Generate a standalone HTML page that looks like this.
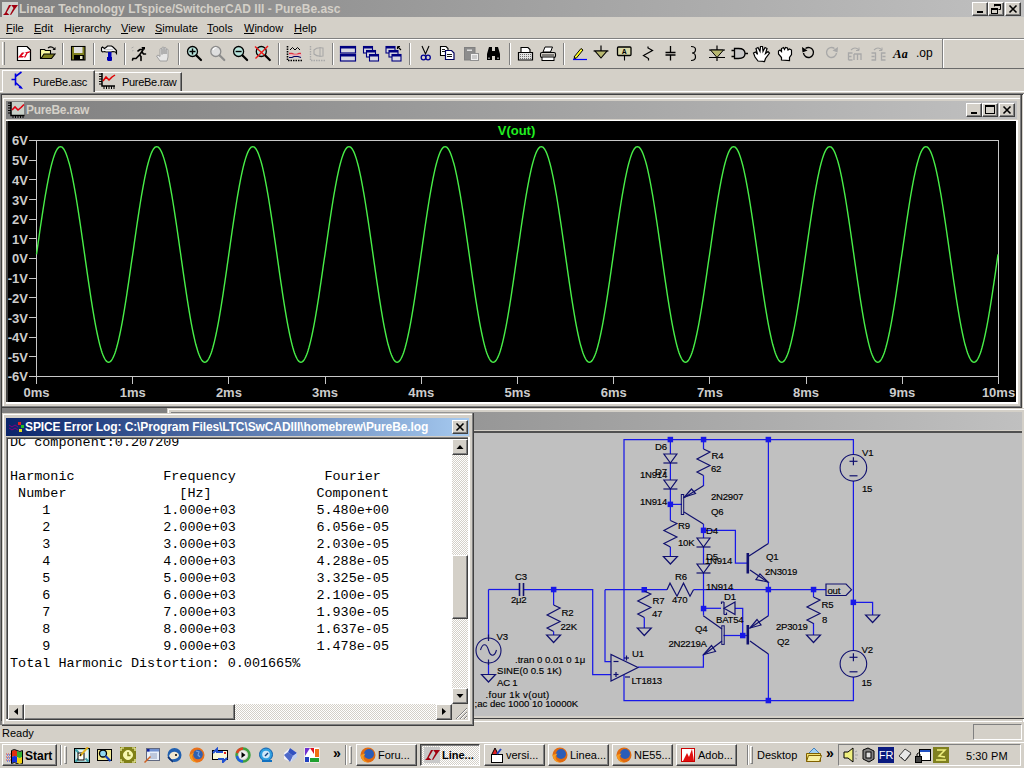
<!DOCTYPE html>
<html><head><meta charset="utf-8">
<style>
*{box-sizing:border-box}
html,body{margin:0;padding:0}
body{width:1024px;height:768px;position:relative;overflow:hidden;background:#d4d0c8;font-family:"Liberation Sans",sans-serif;font-size:11px;color:#000}
.a{position:absolute}
.t{position:absolute;white-space:pre;line-height:1}
.btn{position:absolute;background:#d4d0c8;border-top:1px solid #fff;border-left:1px solid #fff;border-right:1px solid #404040;border-bottom:1px solid #404040;box-shadow:inset -1px -1px 0 #808080}
.sunk{position:absolute;border-top:1px solid #808080;border-left:1px solid #808080;border-right:1px solid #fff;border-bottom:1px solid #fff}
.raised{position:absolute;border-top:1px solid #fff;border-left:1px solid #fff;border-right:1px solid #808080;border-bottom:1px solid #808080}
.sep{position:absolute;width:2px;border-left:1px solid #808080;border-right:1px solid #fff}
.mono{font-family:"Liberation Mono",monospace}
</style></head>
<body>
<!-- main title bar -->
<div class="a" style="left:0;top:0;width:1024px;height:17px;background:linear-gradient(to right,#808080,#c0c0c0)"></div>
<div class="t" style="left:19px;top:3px;font-weight:bold;font-size:12px;color:#d4d0c8">Linear Technology LTspice/SwitcherCAD III - PureBe.asc</div>

<!-- menu -->
<div class="a" style="left:0;top:38px;width:1024px;height:1px;background:#808080"></div>
<div class="a" style="left:0;top:39px;width:1024px;height:1px;background:#fff"></div>

<svg class="a" style="left:0;top:38px" width="1024" height="31" viewBox="0 38 1024 31">
<rect x="2" y="42" width="1" height="23" fill="#fff"/><rect x="4" y="42" width="1" height="23" fill="#808080"/>
<rect x="62" y="43" width="1" height="22" fill="#808080"/><rect x="63" y="43" width="1" height="22" fill="#fff"/>
<rect x="93" y="43" width="1" height="22" fill="#808080"/><rect x="94" y="43" width="1" height="22" fill="#fff"/>
<rect x="124" y="43" width="1" height="22" fill="#808080"/><rect x="125" y="43" width="1" height="22" fill="#fff"/>
<rect x="178" y="43" width="1" height="22" fill="#808080"/><rect x="179" y="43" width="1" height="22" fill="#fff"/>
<rect x="278" y="43" width="1" height="22" fill="#808080"/><rect x="279" y="43" width="1" height="22" fill="#fff"/>
<rect x="332" y="43" width="1" height="22" fill="#808080"/><rect x="333" y="43" width="1" height="22" fill="#fff"/>
<rect x="409" y="43" width="1" height="22" fill="#808080"/><rect x="410" y="43" width="1" height="22" fill="#fff"/>
<rect x="509" y="43" width="1" height="22" fill="#808080"/><rect x="510" y="43" width="1" height="22" fill="#fff"/>
<rect x="563" y="43" width="1" height="22" fill="#808080"/><rect x="564" y="43" width="1" height="22" fill="#fff"/>
<rect x="942" y="39" width="1" height="29" fill="#808080"/><rect x="943" y="39" width="1" height="29" fill="#fff"/>
<path d="M17.5,46.5 h9.5 l3.5,3.5 v10.5 h-13z" fill="#fff" stroke="#000" stroke-width="1.2"/><path d="M27,46.5 l3.5,3.5" fill="none" stroke="#000" stroke-width="1"/>
<path d="M18,57.5 L22,52.5 L24.5,52.5 L21.5,56 L24,56 L23,57.5 Z M24.8,52.5 L30.5,51 L29.2,53 L27.8,53 L25.3,57.5 L23.8,57.5 L26.2,53 Z" fill="#e00018"/>
<path d="M40.5,49.5 h4 l1,1 h5 v8 h-10z" fill="#f8f8a0" stroke="#000" stroke-width="1.1"/><path d="M41,58.5 l3,-4.5 h11 l-3.5,4.5z" fill="#808020" stroke="#000" stroke-width="1.1"/><path d="M48,48 q3,-2.5 6,0.5" fill="none" stroke="#000" stroke-width="1.1"/><path d="M55.5,47 v3 h-3z" fill="#000"/>
<rect x="71.5" y="46.5" width="13.5" height="13.5" fill="#808020" stroke="#000" stroke-width="1.1"/><rect x="74" y="47" width="8.5" height="6" fill="#e0e0e0"/><rect x="74" y="55" width="10" height="5" fill="#000"/><rect x="80" y="56" width="2.5" height="3" fill="#e8e8c8"/>
<path d="M101.5,48 L102.5,47 L104.5,48.5 L106.5,47 L107.5,46 L111.5,46 L113,47 L115,49 L116.5,50.5 L116.5,53.5 L115.5,52 L113,51.5 L111,52 L106,52 L104.5,51.5 L102.5,52 L101.5,51 Z" fill="#f4f4f4" stroke="#000" stroke-width="1.1"/><path d="M104,49.5 h9" stroke="#c8c8c8"/><rect x="108" y="52" width="3.5" height="9" fill="#0000c0"/><rect x="107" y="57" width="5" height="3.5" fill="#0000b0"/>
<path d="M132.5,60 l0.5,-1.5 h3 l3.5,-3.5 l1.5,1.5 v4 M139.5,55 l3.5,-5 M138,51 l2,-1.5 l3,0 M142,52 l1.5,2 h2" fill="none" stroke="#000" stroke-width="1.6" stroke-linecap="round"/><path d="M141.5,47 h3.5 v2.5 h-2.5z" fill="#000"/><path d="M131.5,48 l2,-1 M132,51 l1.5,-0.5" stroke="#a0a0a0" stroke-width="0.8"/>
<path d="M160,61 l-3.5,-5 l1.5,-1 l2,1.5 v-7 q0,-1 1,-1 q1,0 1,1 v5 v-6.5 q0,-1 1,-1 q1,0 1,1 v6 v-5.5 q0,-1 1,-1 q1,0 1,1 v5.5 v-4 q0,-1 1,-1 q1,0 1,1 v7 l-1,4z" fill="#e6e6e6" stroke="#9a9a9a" stroke-width="0.9"/>
<circle cx="192.5" cy="51.5" r="5" fill="#b8e4dc" stroke="#000" stroke-width="1.3"/><path d="M189.5,51.5h6M192.5,48.5v6" stroke="#000" stroke-width="1.4"/><path d="M196.5,55.5 l4.5,4.5" stroke="#000" stroke-width="2.2" stroke-linecap="round"/>
<circle cx="215.8" cy="51.5" r="5" fill="#dedede" stroke="#8c8c8c" stroke-width="1.3"/><path d="M213,50 q1,-2.5 3.5,-2.5" stroke="#fff" fill="none" stroke-width="1.2"/><path d="M219.8,55.5 l4.5,4.5" stroke="#8c8c8c" stroke-width="2.2" stroke-linecap="round"/>
<circle cx="238.6" cy="51.5" r="5" fill="#b8e4dc" stroke="#000" stroke-width="1.3"/><path d="M235.6,51.5h6" stroke="#000" stroke-width="1.4"/><path d="M242.6,55.5 l4.5,4.5" stroke="#000" stroke-width="2.2" stroke-linecap="round"/>
<circle cx="261.3" cy="51.5" r="5" fill="#b8e4dc" stroke="#000" stroke-width="1.3"/><path d="M255,46.5 l12,11 M268,46 l-12.5,12.5" stroke="#f01818" stroke-width="1.4"/><path d="M265.3,55.5 l4.5,4.5" stroke="#000" stroke-width="2.2" stroke-linecap="round"/>
<path d="M287.5,46v14.5h15" fill="none" stroke="#000" stroke-width="1.6" stroke-dasharray="1.5,1"/><path d="M290,50 l2.5,-2.5 l2.5,2.5 l2.5,-2.5 l2.5,2.5" fill="none" stroke="#000" stroke-width="1"/><path d="M289,53.5 h3 l2,1 h3 l2,-1 h2" fill="none" stroke="#e03040" stroke-width="1.4"/><rect x="289" y="54" width="13" height="2" fill="#f0b0c0" opacity="0.6"/><path d="M289,57.5 h3 l2,-1 h4 l3,1" fill="none" stroke="#000060" stroke-width="1.1"/>
<path d="M310.5,46v14.5h15" fill="none" stroke="#a8a8a8" stroke-width="1.4" stroke-dasharray="1.5,1"/><path d="M314,50 q3,-3 9,-2 v8 q-6,1 -9,-2z" fill="none" stroke="#a8a8a8" stroke-width="1.1"/><path d="M320,47v10" stroke="#a8a8a8"/>
<rect x="340.5" y="46.5" width="15" height="6.5" fill="#d8d8e0" stroke="#000080" stroke-width="1.2"/><rect x="340.5" y="46.5" width="15" height="2" fill="#000080"/><rect x="340.5" y="54.5" width="15" height="6.5" fill="#d8d8e0" stroke="#000080" stroke-width="1.2"/><rect x="340.5" y="54.5" width="15" height="2" fill="#000080"/>
<rect x="363.5" y="46.5" width="9" height="6.5" fill="#d8d8e0" stroke="#000080" stroke-width="1.1"/><rect x="363.5" y="46.5" width="9" height="2" fill="#000080"/>
<rect x="366.5" y="50.5" width="9" height="6.5" fill="#d8d8e0" stroke="#000080" stroke-width="1.1"/><rect x="366.5" y="50.5" width="9" height="2" fill="#000080"/>
<rect x="369.5" y="54.5" width="9" height="6.5" fill="#d8d8e0" stroke="#000080" stroke-width="1.1"/><rect x="369.5" y="54.5" width="9" height="2" fill="#000080"/>
<rect x="386.0" y="46.5" width="9" height="6.5" fill="#d8d8e0" stroke="#000080" stroke-width="1.1"/><rect x="386.0" y="46.5" width="9" height="2" fill="#000080"/>
<rect x="389.0" y="50.5" width="9" height="6.5" fill="#d8d8e0" stroke="#000080" stroke-width="1.1"/><rect x="389.0" y="50.5" width="9" height="2" fill="#000080"/>
<rect x="392.0" y="54.5" width="9" height="6.5" fill="#d8d8e0" stroke="#000080" stroke-width="1.1"/><rect x="392.0" y="54.5" width="9" height="2" fill="#000080"/>
<path d="M397.5,46.5 l3.5,3.5 M397.5,46.5 v2.5 M397.5,46.5 h2.5" stroke="#000" stroke-width="1.1" fill="none"/>
<path d="M422,46 l3.5,8 l3.5,-8" fill="none" stroke="#000" stroke-width="1.1"/><circle cx="423.5" cy="57.5" r="2.3" fill="none" stroke="#000090" stroke-width="1.3"/><circle cx="428" cy="57.5" r="2.3" fill="none" stroke="#000090" stroke-width="1.3"/>
<path d="M440.5,46.5h5.5l2,2v7h-7.5z" fill="#fff" stroke="#000" stroke-width="1.1"/><path d="M445.5,50.5h6l2.5,2.5v6.5h-8.5z" fill="#fff" stroke="#000060" stroke-width="1.2"/><path d="M442,49.5h3M442,51.5h3M447,54.5h5M447,56.5h5" stroke="#000" stroke-width="0.9"/>
<rect x="464.5" y="47.5" width="10.5" height="12.5" fill="#8c8c8c" stroke="#808080"/><rect x="467" y="49.5" width="5" height="1.5" fill="#e0e0e0"/><rect x="470.5" y="53.5" width="8" height="7" fill="#f0f0f0" stroke="#909090"/><path d="M472,56h5M472,58h5" stroke="#909090" stroke-width="0.8"/>
<path d="M487,60 v-6 l2,-7 h3 v13z M495,60 v-13 h3 l2,7 v6z M492,51h3v5h-3z" fill="#000"/><path d="M489,57.5v1.5M498,57.5v1.5" stroke="#fff" stroke-width="1"/>
<path d="M521,52 v-4.5 h7 l2,2 v2.5" fill="#fff" stroke="#000" stroke-width="1.1"/><path d="M518.5,52.5 h14 v7.5 h-14z" fill="#e4e4e4" stroke="#000" stroke-width="1.2"/><path d="M520,54.5h11M520,56.5h11M520,58.5h11" stroke="#707070" stroke-dasharray="1,1"/>
<path d="M543,52 l2,-5 h7.5 l-2,5z" fill="#fff" stroke="#000" stroke-width="1"/><rect x="540.5" y="52.5" width="15" height="5" rx="1.5" fill="#d4d0c8" stroke="#000" stroke-width="1.1"/><rect x="542" y="57" width="12" height="3.5" fill="#fff" stroke="#000" stroke-width="1"/><path d="M542,55h12" stroke="#000" stroke-width="0.8"/>
<path d="M573,59.5 h14" stroke="#0000ff" stroke-width="1.2"/><path d="M574,57 l7,-8.5 l2,1.5 l-7,8.5z" fill="#ffff20" stroke="#000" stroke-width="1"/><path d="M574,57 l-0.5,2 l2.5,-0.5z" fill="#000"/>
<path d="M601,45.5v5.5 M593.5,51h15" stroke="#000" stroke-width="1.2"/><path d="M595,51 h12 l-6,7z" fill="#b8b870" stroke="#000" stroke-width="1.1"/>
<rect x="617.5" y="47" width="13.5" height="8.5" rx="1" fill="#d8d8a8" stroke="#000" stroke-width="1.3"/><text x="624.3" y="54" font-size="7.5" font-family="Liberation Mono" font-weight="bold" text-anchor="middle">A</text><path d="M624.5,55.5v5" stroke="#000" stroke-width="1.1"/>
<path d="M648,46.5 v1.5 l4.5,2.5 l-9,5 l5,3 v2" fill="none" stroke="#000" stroke-width="1.2"/>
<path d="M670.5,46v6.5M670.5,55v5.5M665.5,52.5h10M665.5,55h10" stroke="#000" stroke-width="1.3"/>
<path d="M691,46.5 q4.5,0 4.5,3 q0,3.5 -3.5,3.5 q3.5,0 3.5,4 q0,3.5 -4.5,3.5" fill="none" stroke="#000" stroke-width="1.2"/>
<path d="M717,45.5v15.5M709,50h16M709,57.5h16" stroke="#000" stroke-width="1.2"/><path d="M710.5,50h13l-6.5,7.5z" fill="#b8b870" stroke="#000" stroke-width="1"/>
<path d="M734.5,48.5h4q6.5,0 6.5,5q0,5 -6.5,5h-4z" fill="#c8c8c8" stroke="#000" stroke-width="1.3"/><path d="M731.5,50.5h3M731.5,56.5h3M745,53.5h3" stroke="#000" stroke-width="1.3"/>
<path d="M758,61 l-3,-4 l-1.5,-4 l2,-1 l2,2.5 l-1.5,-6 l2,-1 l2,4 l0.5,-5 h2 l0.5,5 l2,-4 l2,1 l-1.5,5 l2.5,-2 l1.5,1.5 l-4,5.5 l-1,3z" fill="#fff" stroke="#000" stroke-width="1.2"/>
<path d="M781.5,60 v-2.5 l-3,-3.5 v-3 l1.5,-1 l1.5,1.5 v-3 l2,-1 l1,2 l1,-2 l2,0.5 l0.5,2 l1.5,-1 l2,1 v4.5 l-2,3 v3z" fill="#fff" stroke="#000" stroke-width="1.2"/>
<path d="M803.5,53 a5,5 0 1,0 2,-4.5" fill="none" stroke="#000" stroke-width="1.4"/><path d="M802,47 l0.5,5.5 l5,-2z" fill="#000"/>
<path d="M836.5,53 a5,5 0 1,1 -2,-4.5" fill="none" stroke="#a8a8a8" stroke-width="1.4"/><path d="M838,47 l-0.5,5.5 l-5,-2z" fill="#a8a8a8"/>
<path d="M848.5,60 v-7 h4 M848.5,56.5 h3 M848.5,60 h4 M854,54 v6 M854,54 h7 v6 M857.5,54 v6" fill="none" stroke="#a8a8a8" stroke-width="1.3"/><path d="M851,50 q4,-4 8,0" fill="none" stroke="#a8a8a8" stroke-width="1.1"/><path d="M859,47.5v3h-3" fill="none" stroke="#a8a8a8"/>
<path d="M871.5,53 h4 v7 h-4 M871.5,56.5 h3 M885.5,53 h-4 v7 h4 M885.5,56.5 h-3" fill="none" stroke="#a8a8a8" stroke-width="1.3"/><path d="M874,50 q4,-4 8,0" fill="none" stroke="#a8a8a8" stroke-width="1.1"/><path d="M882,47.5v3h-3" fill="none" stroke="#a8a8a8"/>
<text x="893" y="58" font-family="Liberation Serif" font-style="italic" font-weight="bold" font-size="13">A<tspan font-size="12">a</tspan></text>
<text x="916" y="57" font-family="Liberation Sans" font-size="12">.op</text>
</svg>
<!-- toolbar bottom -->
<div class="a" style="left:0;top:68px;width:1024px;height:1px;background:#6a6a6a"></div>

<!-- MDI workspace -->
<div class="a" style="left:0;top:93px;width:1024px;height:632px;background:#808080"></div>
<div class="a" style="left:0;top:93px;width:1024px;height:1px;background:#808080"></div>
<div class="a" style="left:1px;top:94px;width:1023px;height:1px;background:#404040"></div>
<div class="a" style="left:1px;top:94px;width:1px;height:627px;background:#404040"></div>
<div class="a" style="left:473px;top:719px;width:551px;height:7px;background:#d4d0c8"></div>
<div class="a" style="left:2px;top:721px;width:1022px;height:1px;background:#fff"></div>
<div class="a" style="left:1022px;top:95px;width:2px;height:627px;background:#d4d0c8"></div>
<div class="a" style="left:1023px;top:94px;width:1px;height:628px;background:#fff"></div>

<!-- plot window -->
<div class="a" style="left:2px;top:95px;width:1020px;height:313px;background:#d4d0c8"></div>
<div class="a" style="left:3px;top:98px;width:1017px;height:1px;background:#fff"></div>
<div class="a" style="left:3px;top:98px;width:1px;height:308px;background:#fff"></div>
<div class="a" style="left:1020px;top:95px;width:1px;height:312px;background:#808080"></div>
<div class="a" style="left:1021px;top:95px;width:1px;height:313px;background:#404040"></div>
<div class="a" style="left:2px;top:406px;width:1019px;height:1px;background:#808080"></div>
<div class="a" style="left:2px;top:407px;width:1020px;height:1px;background:#404040"></div>
<div class="a" style="left:6px;top:101px;width:1011px;height:18px;background:linear-gradient(to right,#808080,#c0c0c0)"></div>
<div class="a" style="left:6px;top:120px;width:1012px;height:284px;background:#fff"></div>
<div class="a" style="left:6px;top:121px;width:2px;height:281px;background:#404040"></div>
<svg class="a" style="left:8px;top:121px" width="1008" height="281" viewBox="8 121 1008 281">
<rect x="8" y="121" width="1008" height="281" fill="#000"/>
<g stroke="#c8c8c8" stroke-width="1" fill="none">
<rect x="36.5" y="140.5" width="962" height="236"/>
<line x1="29" y1="140.5" x2="36.5" y2="140.5"/>
<line x1="29" y1="160.5" x2="36.5" y2="160.5"/>
<line x1="29" y1="179.5" x2="36.5" y2="179.5"/>
<line x1="29" y1="199.5" x2="36.5" y2="199.5"/>
<line x1="29" y1="219.5" x2="36.5" y2="219.5"/>
<line x1="29" y1="238.5" x2="36.5" y2="238.5"/>
<line x1="29" y1="258.5" x2="36.5" y2="258.5"/>
<line x1="29" y1="278.5" x2="36.5" y2="278.5"/>
<line x1="29" y1="297.5" x2="36.5" y2="297.5"/>
<line x1="29" y1="317.5" x2="36.5" y2="317.5"/>
<line x1="29" y1="337.5" x2="36.5" y2="337.5"/>
<line x1="29" y1="356.5" x2="36.5" y2="356.5"/>
<line x1="29" y1="376.5" x2="36.5" y2="376.5"/>
<line x1="36.5" y1="376.5" x2="36.5" y2="384"/>
<line x1="132.5" y1="376.5" x2="132.5" y2="384"/>
<line x1="228.5" y1="376.5" x2="228.5" y2="384"/>
<line x1="325.5" y1="376.5" x2="325.5" y2="384"/>
<line x1="421.5" y1="376.5" x2="421.5" y2="384"/>
<line x1="517.5" y1="376.5" x2="517.5" y2="384"/>
<line x1="613.5" y1="376.5" x2="613.5" y2="384"/>
<line x1="709.5" y1="376.5" x2="709.5" y2="384"/>
<line x1="806.5" y1="376.5" x2="806.5" y2="384"/>
<line x1="902.5" y1="376.5" x2="902.5" y2="384"/>
<line x1="998.5" y1="376.5" x2="998.5" y2="384"/>
</g>
<g fill="#cccccc" font-family="Liberation Sans" font-weight="bold" font-size="13" text-anchor="end">
<text x="28" y="144.5">6V</text>
<text x="28" y="164.5">5V</text>
<text x="28" y="184.5">4V</text>
<text x="28" y="204.5">3V</text>
<text x="28" y="223.5">2V</text>
<text x="28" y="243.5">1V</text>
<text x="28" y="262.5">0V</text>
<text x="28" y="282.5">-1V</text>
<text x="28" y="302.5">-2V</text>
<text x="28" y="322.5">-3V</text>
<text x="28" y="341.5">-4V</text>
<text x="28" y="361.5">-5V</text>
<text x="28" y="380.5">-6V</text>
</g>
<g fill="#cccccc" font-family="Liberation Sans" font-weight="bold" font-size="13" text-anchor="middle">
<text x="36.5" y="397">0ms</text>
<text x="132.7" y="397">1ms</text>
<text x="228.9" y="397">2ms</text>
<text x="325.1" y="397">3ms</text>
<text x="421.3" y="397">4ms</text>
<text x="517.5" y="397">5ms</text>
<text x="613.7" y="397">6ms</text>
<text x="709.9" y="397">7ms</text>
<text x="806.1" y="397">8ms</text>
<text x="902.3" y="397">9ms</text>
<text x="998.5" y="397">10ms</text>
</g>
<text x="516.5" y="135" fill="#20f020" font-family="Liberation Sans" font-weight="bold" font-size="13" text-anchor="middle">V(out)</text>
<polyline fill="none" stroke="#48ee48" stroke-width="1.4" points="36.5,254.4 37.3,248.8 38.1,243.2 38.9,237.6 39.7,232.0 40.5,226.5 41.3,221.1 42.1,215.8 42.9,210.6 43.7,205.5 44.5,200.5 45.3,195.7 46.1,191.1 46.9,186.6 47.7,182.3 48.5,178.2 49.3,174.3 50.1,170.7 50.9,167.2 51.7,164.0 52.5,161.1 53.3,158.4 54.1,156.0 54.9,153.8 55.7,151.9 56.5,150.3 57.3,149.0 58.1,148.0 58.9,147.2 59.7,146.8 60.5,146.6 61.3,146.8 62.1,147.2 62.9,148.0 63.7,149.0 64.5,150.3 65.3,151.9 66.1,153.8 66.9,156.0 67.7,158.4 68.5,161.1 69.4,164.0 70.2,167.2 71.0,170.7 71.8,174.3 72.6,178.2 73.4,182.3 74.2,186.6 75.0,191.1 75.8,195.7 76.6,200.5 77.4,205.5 78.2,210.6 79.0,215.8 79.8,221.1 80.6,226.5 81.4,232.0 82.2,237.6 83.0,243.2 83.8,248.8 84.6,254.4 85.4,260.1 86.2,265.7 87.0,271.3 87.8,276.8 88.6,282.3 89.4,287.7 90.2,293.1 91.0,298.3 91.8,303.4 92.6,308.3 93.4,313.1 94.2,317.8 95.0,322.3 95.8,326.6 96.6,330.6 97.4,334.5 98.2,338.2 99.0,341.6 99.8,344.8 100.6,347.8 101.4,350.5 102.2,352.9 103.0,355.1 103.8,356.9 104.6,358.5 105.4,359.9 106.2,360.9 107.0,361.6 107.8,362.1 108.6,362.2 109.4,362.1 110.2,361.6 111.0,360.9 111.8,359.9 112.6,358.5 113.4,356.9 114.2,355.1 115.0,352.9 115.8,350.5 116.6,347.8 117.4,344.8 118.2,341.6 119.0,338.2 119.8,334.5 120.6,330.6 121.4,326.6 122.2,322.3 123.0,317.8 123.8,313.1 124.6,308.3 125.4,303.4 126.2,298.3 127.0,293.1 127.8,287.7 128.6,282.3 129.4,276.8 130.2,271.3 131.0,265.7 131.8,260.1 132.7,254.4 133.5,248.8 134.3,243.2 135.1,237.6 135.9,232.0 136.7,226.5 137.5,221.1 138.3,215.8 139.1,210.6 139.9,205.5 140.7,200.5 141.5,195.7 142.3,191.1 143.1,186.6 143.9,182.3 144.7,178.2 145.5,174.3 146.3,170.7 147.1,167.2 147.9,164.0 148.7,161.1 149.5,158.4 150.3,156.0 151.1,153.8 151.9,151.9 152.7,150.3 153.5,149.0 154.3,148.0 155.1,147.2 155.9,146.8 156.7,146.6 157.5,146.8 158.3,147.2 159.1,148.0 159.9,149.0 160.7,150.3 161.5,151.9 162.3,153.8 163.1,156.0 163.9,158.4 164.7,161.1 165.5,164.0 166.3,167.2 167.1,170.7 167.9,174.3 168.7,178.2 169.5,182.3 170.3,186.6 171.1,191.1 171.9,195.7 172.7,200.5 173.5,205.5 174.3,210.6 175.1,215.8 175.9,221.1 176.7,226.5 177.5,232.0 178.3,237.6 179.1,243.2 179.9,248.8 180.7,254.4 181.5,260.1 182.3,265.7 183.1,271.3 183.9,276.8 184.7,282.3 185.5,287.7 186.3,293.1 187.1,298.3 187.9,303.4 188.7,308.3 189.5,313.1 190.3,317.8 191.1,322.3 191.9,326.6 192.7,330.6 193.5,334.5 194.3,338.2 195.1,341.6 195.9,344.8 196.8,347.8 197.6,350.5 198.4,352.9 199.2,355.1 200.0,356.9 200.8,358.5 201.6,359.9 202.4,360.9 203.2,361.6 204.0,362.1 204.8,362.2 205.6,362.1 206.4,361.6 207.2,360.9 208.0,359.9 208.8,358.5 209.6,356.9 210.4,355.1 211.2,352.9 212.0,350.5 212.8,347.8 213.6,344.8 214.4,341.6 215.2,338.2 216.0,334.5 216.8,330.6 217.6,326.6 218.4,322.3 219.2,317.8 220.0,313.1 220.8,308.3 221.6,303.4 222.4,298.3 223.2,293.1 224.0,287.7 224.8,282.3 225.6,276.8 226.4,271.3 227.2,265.7 228.0,260.1 228.8,254.4 229.6,248.8 230.4,243.2 231.2,237.6 232.0,232.0 232.8,226.5 233.6,221.1 234.4,215.8 235.2,210.6 236.0,205.5 236.8,200.5 237.6,195.7 238.4,191.1 239.2,186.6 240.0,182.3 240.8,178.2 241.6,174.3 242.4,170.7 243.2,167.2 244.0,164.0 244.8,161.1 245.6,158.4 246.4,156.0 247.2,153.8 248.0,151.9 248.8,150.3 249.6,149.0 250.4,148.0 251.2,147.2 252.0,146.8 252.8,146.6 253.6,146.8 254.4,147.2 255.2,148.0 256.0,149.0 256.8,150.3 257.6,151.9 258.4,153.8 259.2,156.0 260.0,158.4 260.9,161.1 261.7,164.0 262.5,167.2 263.3,170.7 264.1,174.3 264.9,178.2 265.7,182.3 266.5,186.6 267.3,191.1 268.1,195.7 268.9,200.5 269.7,205.5 270.5,210.6 271.3,215.8 272.1,221.1 272.9,226.5 273.7,232.0 274.5,237.6 275.3,243.2 276.1,248.8 276.9,254.4 277.7,260.1 278.5,265.7 279.3,271.3 280.1,276.8 280.9,282.3 281.7,287.7 282.5,293.1 283.3,298.3 284.1,303.4 284.9,308.3 285.7,313.1 286.5,317.8 287.3,322.3 288.1,326.6 288.9,330.6 289.7,334.5 290.5,338.2 291.3,341.6 292.1,344.8 292.9,347.8 293.7,350.5 294.5,352.9 295.3,355.1 296.1,356.9 296.9,358.5 297.7,359.9 298.5,360.9 299.3,361.6 300.1,362.1 300.9,362.2 301.7,362.1 302.5,361.6 303.3,360.9 304.1,359.9 304.9,358.5 305.7,356.9 306.5,355.1 307.3,352.9 308.1,350.5 308.9,347.8 309.7,344.8 310.5,341.6 311.3,338.2 312.1,334.5 312.9,330.6 313.7,326.6 314.5,322.3 315.3,317.8 316.1,313.1 316.9,308.3 317.7,303.4 318.5,298.3 319.3,293.1 320.1,287.7 320.9,282.3 321.7,276.8 322.5,271.3 323.3,265.7 324.1,260.1 325.0,254.4 325.8,248.8 326.6,243.2 327.4,237.6 328.2,232.0 329.0,226.5 329.8,221.1 330.6,215.8 331.4,210.6 332.2,205.5 333.0,200.5 333.8,195.7 334.6,191.1 335.4,186.6 336.2,182.3 337.0,178.2 337.8,174.3 338.6,170.7 339.4,167.2 340.2,164.0 341.0,161.1 341.8,158.4 342.6,156.0 343.4,153.8 344.2,151.9 345.0,150.3 345.8,149.0 346.6,148.0 347.4,147.2 348.2,146.8 349.0,146.6 349.8,146.8 350.6,147.2 351.4,148.0 352.2,149.0 353.0,150.3 353.8,151.9 354.6,153.8 355.4,156.0 356.2,158.4 357.0,161.1 357.8,164.0 358.6,167.2 359.4,170.7 360.2,174.3 361.0,178.2 361.8,182.3 362.6,186.6 363.4,191.1 364.2,195.7 365.0,200.5 365.8,205.5 366.6,210.6 367.4,215.8 368.2,221.1 369.0,226.5 369.8,232.0 370.6,237.6 371.4,243.2 372.2,248.8 373.0,254.4 373.8,260.1 374.6,265.7 375.4,271.3 376.2,276.8 377.0,282.3 377.8,287.7 378.6,293.1 379.4,298.3 380.2,303.4 381.0,308.3 381.8,313.1 382.6,317.8 383.4,322.3 384.2,326.6 385.0,330.6 385.8,334.5 386.6,338.2 387.4,341.6 388.2,344.8 389.1,347.8 389.9,350.5 390.7,352.9 391.5,355.1 392.3,356.9 393.1,358.5 393.9,359.9 394.7,360.9 395.5,361.6 396.3,362.1 397.1,362.2 397.9,362.1 398.7,361.6 399.5,360.9 400.3,359.9 401.1,358.5 401.9,356.9 402.7,355.1 403.5,352.9 404.3,350.5 405.1,347.8 405.9,344.8 406.7,341.6 407.5,338.2 408.3,334.5 409.1,330.6 409.9,326.6 410.7,322.3 411.5,317.8 412.3,313.1 413.1,308.3 413.9,303.4 414.7,298.3 415.5,293.1 416.3,287.7 417.1,282.3 417.9,276.8 418.7,271.3 419.5,265.7 420.3,260.1 421.1,254.4 421.9,248.8 422.7,243.2 423.5,237.6 424.3,232.0 425.1,226.5 425.9,221.1 426.7,215.8 427.5,210.6 428.3,205.5 429.1,200.5 429.9,195.7 430.7,191.1 431.5,186.6 432.3,182.3 433.1,178.2 433.9,174.3 434.7,170.7 435.5,167.2 436.3,164.0 437.1,161.1 437.9,158.4 438.7,156.0 439.5,153.8 440.3,151.9 441.1,150.3 441.9,149.0 442.7,148.0 443.5,147.2 444.3,146.8 445.1,146.6 445.9,146.8 446.7,147.2 447.5,148.0 448.3,149.0 449.1,150.3 449.9,151.9 450.7,153.8 451.5,156.0 452.3,158.4 453.1,161.1 454.0,164.0 454.8,167.2 455.6,170.7 456.4,174.3 457.2,178.2 458.0,182.3 458.8,186.6 459.6,191.1 460.4,195.7 461.2,200.5 462.0,205.5 462.8,210.6 463.6,215.8 464.4,221.1 465.2,226.5 466.0,232.0 466.8,237.6 467.6,243.2 468.4,248.8 469.2,254.4 470.0,260.1 470.8,265.7 471.6,271.3 472.4,276.8 473.2,282.3 474.0,287.7 474.8,293.1 475.6,298.3 476.4,303.4 477.2,308.3 478.0,313.1 478.8,317.8 479.6,322.3 480.4,326.6 481.2,330.6 482.0,334.5 482.8,338.2 483.6,341.6 484.4,344.8 485.2,347.8 486.0,350.5 486.8,352.9 487.6,355.1 488.4,356.9 489.2,358.5 490.0,359.9 490.8,360.9 491.6,361.6 492.4,362.1 493.2,362.2 494.0,362.1 494.8,361.6 495.6,360.9 496.4,359.9 497.2,358.5 498.0,356.9 498.8,355.1 499.6,352.9 500.4,350.5 501.2,347.8 502.0,344.8 502.8,341.6 503.6,338.2 504.4,334.5 505.2,330.6 506.0,326.6 506.8,322.3 507.6,317.8 508.4,313.1 509.2,308.3 510.0,303.4 510.8,298.3 511.6,293.1 512.4,287.7 513.2,282.3 514.0,276.8 514.8,271.3 515.6,265.7 516.4,260.1 517.2,254.4 518.1,248.8 518.9,243.2 519.7,237.6 520.5,232.0 521.3,226.5 522.1,221.1 522.9,215.8 523.7,210.6 524.5,205.5 525.3,200.5 526.1,195.7 526.9,191.1 527.7,186.6 528.5,182.3 529.3,178.2 530.1,174.3 530.9,170.7 531.7,167.2 532.5,164.0 533.3,161.1 534.1,158.4 534.9,156.0 535.7,153.8 536.5,151.9 537.3,150.3 538.1,149.0 538.9,148.0 539.7,147.2 540.5,146.8 541.3,146.6 542.1,146.8 542.9,147.2 543.7,148.0 544.5,149.0 545.3,150.3 546.1,151.9 546.9,153.8 547.7,156.0 548.5,158.4 549.3,161.1 550.1,164.0 550.9,167.2 551.7,170.7 552.5,174.3 553.3,178.2 554.1,182.3 554.9,186.6 555.7,191.1 556.5,195.7 557.3,200.5 558.1,205.5 558.9,210.6 559.7,215.8 560.5,221.1 561.3,226.5 562.1,232.0 562.9,237.6 563.7,243.2 564.5,248.8 565.3,254.4 566.1,260.1 566.9,265.7 567.7,271.3 568.5,276.8 569.3,282.3 570.1,287.7 570.9,293.1 571.7,298.3 572.5,303.4 573.3,308.3 574.1,313.1 574.9,317.8 575.7,322.3 576.5,326.6 577.3,330.6 578.1,334.5 578.9,338.2 579.7,341.6 580.5,344.8 581.4,347.8 582.2,350.5 583.0,352.9 583.8,355.1 584.6,356.9 585.4,358.5 586.2,359.9 587.0,360.9 587.8,361.6 588.6,362.1 589.4,362.2 590.2,362.1 591.0,361.6 591.8,360.9 592.6,359.9 593.4,358.5 594.2,356.9 595.0,355.1 595.8,352.9 596.6,350.5 597.4,347.8 598.2,344.8 599.0,341.6 599.8,338.2 600.6,334.5 601.4,330.6 602.2,326.6 603.0,322.3 603.8,317.8 604.6,313.1 605.4,308.3 606.2,303.4 607.0,298.3 607.8,293.1 608.6,287.7 609.4,282.3 610.2,276.8 611.0,271.3 611.8,265.7 612.6,260.1 613.4,254.4 614.2,248.8 615.0,243.2 615.8,237.6 616.6,232.0 617.4,226.5 618.2,221.1 619.0,215.8 619.8,210.6 620.6,205.5 621.4,200.5 622.2,195.7 623.0,191.1 623.8,186.6 624.6,182.3 625.4,178.2 626.2,174.3 627.0,170.7 627.8,167.2 628.6,164.0 629.4,161.1 630.2,158.4 631.0,156.0 631.8,153.8 632.6,151.9 633.4,150.3 634.2,149.0 635.0,148.0 635.8,147.2 636.6,146.8 637.4,146.6 638.2,146.8 639.0,147.2 639.8,148.0 640.6,149.0 641.4,150.3 642.2,151.9 643.0,153.8 643.8,156.0 644.6,158.4 645.5,161.1 646.3,164.0 647.1,167.2 647.9,170.7 648.7,174.3 649.5,178.2 650.3,182.3 651.1,186.6 651.9,191.1 652.7,195.7 653.5,200.5 654.3,205.5 655.1,210.6 655.9,215.8 656.7,221.1 657.5,226.5 658.3,232.0 659.1,237.6 659.9,243.2 660.7,248.8 661.5,254.4 662.3,260.1 663.1,265.7 663.9,271.3 664.7,276.8 665.5,282.3 666.3,287.7 667.1,293.1 667.9,298.3 668.7,303.4 669.5,308.3 670.3,313.1 671.1,317.8 671.9,322.3 672.7,326.6 673.5,330.6 674.3,334.5 675.1,338.2 675.9,341.6 676.7,344.8 677.5,347.8 678.3,350.5 679.1,352.9 679.9,355.1 680.7,356.9 681.5,358.5 682.3,359.9 683.1,360.9 683.9,361.6 684.7,362.1 685.5,362.2 686.3,362.1 687.1,361.6 687.9,360.9 688.7,359.9 689.5,358.5 690.3,356.9 691.1,355.1 691.9,352.9 692.7,350.5 693.5,347.8 694.3,344.8 695.1,341.6 695.9,338.2 696.7,334.5 697.5,330.6 698.3,326.6 699.1,322.3 699.9,317.8 700.7,313.1 701.5,308.3 702.3,303.4 703.1,298.3 703.9,293.1 704.7,287.7 705.5,282.3 706.3,276.8 707.1,271.3 707.9,265.7 708.7,260.1 709.6,254.4 710.4,248.8 711.2,243.2 712.0,237.6 712.8,232.0 713.6,226.5 714.4,221.1 715.2,215.8 716.0,210.6 716.8,205.5 717.6,200.5 718.4,195.7 719.2,191.1 720.0,186.6 720.8,182.3 721.6,178.2 722.4,174.3 723.2,170.7 724.0,167.2 724.8,164.0 725.6,161.1 726.4,158.4 727.2,156.0 728.0,153.8 728.8,151.9 729.6,150.3 730.4,149.0 731.2,148.0 732.0,147.2 732.8,146.8 733.6,146.6 734.4,146.8 735.2,147.2 736.0,148.0 736.8,149.0 737.6,150.3 738.4,151.9 739.2,153.8 740.0,156.0 740.8,158.4 741.6,161.1 742.4,164.0 743.2,167.2 744.0,170.7 744.8,174.3 745.6,178.2 746.4,182.3 747.2,186.6 748.0,191.1 748.8,195.7 749.6,200.5 750.4,205.5 751.2,210.6 752.0,215.8 752.8,221.1 753.6,226.5 754.4,232.0 755.2,237.6 756.0,243.2 756.8,248.8 757.6,254.4 758.4,260.1 759.2,265.7 760.0,271.3 760.8,276.8 761.6,282.3 762.4,287.7 763.2,293.1 764.0,298.3 764.8,303.4 765.6,308.3 766.4,313.1 767.2,317.8 768.0,322.3 768.8,326.6 769.6,330.6 770.4,334.5 771.2,338.2 772.0,341.6 772.8,344.8 773.7,347.8 774.5,350.5 775.3,352.9 776.1,355.1 776.9,356.9 777.7,358.5 778.5,359.9 779.3,360.9 780.1,361.6 780.9,362.1 781.7,362.2 782.5,362.1 783.3,361.6 784.1,360.9 784.9,359.9 785.7,358.5 786.5,356.9 787.3,355.1 788.1,352.9 788.9,350.5 789.7,347.8 790.5,344.8 791.3,341.6 792.1,338.2 792.9,334.5 793.7,330.6 794.5,326.6 795.3,322.3 796.1,317.8 796.9,313.1 797.7,308.3 798.5,303.4 799.3,298.3 800.1,293.1 800.9,287.7 801.7,282.3 802.5,276.8 803.3,271.3 804.1,265.7 804.9,260.1 805.7,254.4 806.5,248.8 807.3,243.2 808.1,237.6 808.9,232.0 809.7,226.5 810.5,221.1 811.3,215.8 812.1,210.6 812.9,205.5 813.7,200.5 814.5,195.7 815.3,191.1 816.1,186.6 816.9,182.3 817.7,178.2 818.5,174.3 819.3,170.7 820.1,167.2 820.9,164.0 821.7,161.1 822.5,158.4 823.3,156.0 824.1,153.8 824.9,151.9 825.7,150.3 826.5,149.0 827.3,148.0 828.1,147.2 828.9,146.8 829.7,146.6 830.5,146.8 831.3,147.2 832.1,148.0 832.9,149.0 833.7,150.3 834.5,151.9 835.3,153.8 836.1,156.0 836.9,158.4 837.8,161.1 838.6,164.0 839.4,167.2 840.2,170.7 841.0,174.3 841.8,178.2 842.6,182.3 843.4,186.6 844.2,191.1 845.0,195.7 845.8,200.5 846.6,205.5 847.4,210.6 848.2,215.8 849.0,221.1 849.8,226.5 850.6,232.0 851.4,237.6 852.2,243.2 853.0,248.8 853.8,254.4 854.6,260.1 855.4,265.7 856.2,271.3 857.0,276.8 857.8,282.3 858.6,287.7 859.4,293.1 860.2,298.3 861.0,303.4 861.8,308.3 862.6,313.1 863.4,317.8 864.2,322.3 865.0,326.6 865.8,330.6 866.6,334.5 867.4,338.2 868.2,341.6 869.0,344.8 869.8,347.8 870.6,350.5 871.4,352.9 872.2,355.1 873.0,356.9 873.8,358.5 874.6,359.9 875.4,360.9 876.2,361.6 877.0,362.1 877.8,362.2 878.6,362.1 879.4,361.6 880.2,360.9 881.0,359.9 881.8,358.5 882.6,356.9 883.4,355.1 884.2,352.9 885.0,350.5 885.8,347.8 886.6,344.8 887.4,341.6 888.2,338.2 889.0,334.5 889.8,330.6 890.6,326.6 891.4,322.3 892.2,317.8 893.0,313.1 893.8,308.3 894.6,303.4 895.4,298.3 896.2,293.1 897.0,287.7 897.8,282.3 898.6,276.8 899.4,271.3 900.2,265.7 901.0,260.1 901.9,254.4 902.7,248.8 903.5,243.2 904.3,237.6 905.1,232.0 905.9,226.5 906.7,221.1 907.5,215.8 908.3,210.6 909.1,205.5 909.9,200.5 910.7,195.7 911.5,191.1 912.3,186.6 913.1,182.3 913.9,178.2 914.7,174.3 915.5,170.7 916.3,167.2 917.1,164.0 917.9,161.1 918.7,158.4 919.5,156.0 920.3,153.8 921.1,151.9 921.9,150.3 922.7,149.0 923.5,148.0 924.3,147.2 925.1,146.8 925.9,146.6 926.7,146.8 927.5,147.2 928.3,148.0 929.1,149.0 929.9,150.3 930.7,151.9 931.5,153.8 932.3,156.0 933.1,158.4 933.9,161.1 934.7,164.0 935.5,167.2 936.3,170.7 937.1,174.3 937.9,178.2 938.7,182.3 939.5,186.6 940.3,191.1 941.1,195.7 941.9,200.5 942.7,205.5 943.5,210.6 944.3,215.8 945.1,221.1 945.9,226.5 946.7,232.0 947.5,237.6 948.3,243.2 949.1,248.8 949.9,254.4 950.7,260.1 951.5,265.7 952.3,271.3 953.1,276.8 953.9,282.3 954.7,287.7 955.5,293.1 956.3,298.3 957.1,303.4 957.9,308.3 958.7,313.1 959.5,317.8 960.3,322.3 961.1,326.6 961.9,330.6 962.7,334.5 963.5,338.2 964.3,341.6 965.1,344.8 966.0,347.8 966.8,350.5 967.6,352.9 968.4,355.1 969.2,356.9 970.0,358.5 970.8,359.9 971.6,360.9 972.4,361.6 973.2,362.1 974.0,362.2 974.8,362.1 975.6,361.6 976.4,360.9 977.2,359.9 978.0,358.5 978.8,356.9 979.6,355.1 980.4,352.9 981.2,350.5 982.0,347.8 982.8,344.8 983.6,341.6 984.4,338.2 985.2,334.5 986.0,330.6 986.8,326.6 987.6,322.3 988.4,317.8 989.2,313.1 990.0,308.3 990.8,303.4 991.6,298.3 992.4,293.1 993.2,287.7 994.0,282.3 994.8,276.8 995.6,271.3 996.4,265.7 997.2,260.1 998.0,254.4"/>
</svg>

<!-- schematic window -->
<div class="a" style="left:167px;top:408px;width:857px;height:311px;background:#d4d0c8"></div>
<div class="a" style="left:168px;top:409px;width:856px;height:1px;background:#fff"></div>
<div class="a" style="left:168px;top:409px;width:1px;height:309px;background:#fff"></div>
<div class="a" style="left:167px;top:718px;width:857px;height:1px;background:#404040"></div>
<div class="a" style="left:171px;top:412px;width:851px;height:18px;background:linear-gradient(to right,#808080,#c0c0c0)"></div>
<div class="a" style="left:171px;top:430px;width:851px;height:1px;background:#d4d0c8"></div>
<div class="a" style="left:171px;top:431px;width:851px;height:2px;background:#505050"></div>
<div class="a" style="left:171px;top:714px;width:851px;height:2px;background:#fff"></div>
<svg class="a" style="left:173px;top:433px" width="849" height="283" viewBox="173 433 849 283">
<rect x="173" y="433" width="849" height="283" fill="#c0c0c0"/>
<polyline fill="none" stroke="#1818e8" stroke-width="1.25" points="624.0,675.0 624.0,700.5 853.4,700.5 853.4,677.0"/>
<polyline fill="none" stroke="#1818e8" stroke-width="1.25" points="624.0,660.0 624.0,439.5 853.4,439.5 853.4,454.5"/>
<polyline fill="none" stroke="#1818e8" stroke-width="1.25" points="670.4,439.5 670.4,454.0"/>
<polyline fill="none" stroke="#1818e8" stroke-width="1.25" points="670.4,463.0 670.4,480.0"/>
<polyline fill="none" stroke="#1818e8" stroke-width="1.25" points="670.4,489.0 670.4,520.5"/>
<polyline fill="none" stroke="#1818e8" stroke-width="1.25" points="670.4,547.0 670.4,556.5"/>
<polyline fill="none" stroke="#1818e8" stroke-width="1.25" points="673.0,504.4 682.0,504.4"/>
<polyline fill="none" stroke="#1818e8" stroke-width="1.25" points="703.5,439.5 703.5,449.0"/>
<polyline fill="none" stroke="#1818e8" stroke-width="1.25" points="703.5,475.5 703.5,486.0"/>
<polyline fill="none" stroke="#1818e8" stroke-width="1.25" points="703.5,524.0 703.5,538.0"/>
<polyline fill="none" stroke="#1818e8" stroke-width="1.25" points="703.5,547.0 703.5,564.0"/>
<polyline fill="none" stroke="#1818e8" stroke-width="1.25" points="703.5,573.0 703.5,615.5"/>
<polyline fill="none" stroke="#1818e8" stroke-width="1.25" points="703.5,530.4 735.4,530.4 735.4,563.0 747.0,563.0"/>
<polyline fill="none" stroke="#1818e8" stroke-width="1.25" points="768.4,439.5 768.4,543.4"/>
<polyline fill="none" stroke="#1818e8" stroke-width="1.25" points="768.4,582.5 768.4,615.8"/>
<polyline fill="none" stroke="#1818e8" stroke-width="1.25" points="768.4,654.0 768.4,700.5"/>
<polyline fill="none" stroke="#1818e8" stroke-width="1.25" points="605.0,589.7 667.0,589.7"/>
<polyline fill="none" stroke="#1818e8" stroke-width="1.25" points="693.5,589.7 826.0,589.7"/>
<polyline fill="none" stroke="#1818e8" stroke-width="1.25" points="605.0,589.7 605.0,661.6 611.0,661.6"/>
<polyline fill="none" stroke="#1818e8" stroke-width="1.25" points="488.5,589.5 519.5,589.5"/>
<polyline fill="none" stroke="#1818e8" stroke-width="1.25" points="523.5,589.5 592.7,589.5 592.7,674.5 611.0,674.5"/>
<polyline fill="none" stroke="#1818e8" stroke-width="1.25" points="488.5,589.5 488.5,637.5"/>
<polyline fill="none" stroke="#1818e8" stroke-width="1.25" points="488.5,662.5 488.5,674.5"/>
<polyline fill="none" stroke="#1818e8" stroke-width="1.25" points="553.6,589.5 553.6,605.0"/>
<polyline fill="none" stroke="#1818e8" stroke-width="1.25" points="553.6,631.5 553.6,635.0"/>
<polyline fill="none" stroke="#1818e8" stroke-width="1.25" points="644.3,589.7 644.3,591.0"/>
<polyline fill="none" stroke="#1818e8" stroke-width="1.25" points="644.3,617.5 644.3,628.0"/>
<polyline fill="none" stroke="#1818e8" stroke-width="1.25" points="638.0,667.0 703.4,667.0 703.4,655.0"/>
<polyline fill="none" stroke="#1818e8" stroke-width="1.25" points="703.3,608.3 721.0,608.3"/>
<polyline fill="none" stroke="#1818e8" stroke-width="1.25" points="735.0,608.3 742.7,608.3 742.7,635.5"/>
<polyline fill="none" stroke="#1818e8" stroke-width="1.25" points="723.5,635.5 747.0,635.5"/>
<polyline fill="none" stroke="#1818e8" stroke-width="1.25" points="813.5,589.5 813.5,597.0"/>
<polyline fill="none" stroke="#1818e8" stroke-width="1.25" points="813.5,623.0 813.5,635.0"/>
<polyline fill="none" stroke="#1818e8" stroke-width="1.25" points="853.4,481.0 853.4,650.5"/>
<polyline fill="none" stroke="#1818e8" stroke-width="1.25" points="853.4,602.4 872.6,602.4 872.6,615.0"/>
<rect x="667.6" y="436.8" width="5.5" height="5.5" fill="#1818e8"/>
<rect x="700.8" y="436.8" width="5.5" height="5.5" fill="#1818e8"/>
<rect x="765.6" y="436.8" width="5.5" height="5.5" fill="#1818e8"/>
<rect x="667.6" y="501.6" width="5.5" height="5.5" fill="#1818e8"/>
<rect x="700.8" y="527.6" width="5.5" height="5.5" fill="#1818e8"/>
<rect x="550.9" y="586.8" width="5.5" height="5.5" fill="#1818e8"/>
<rect x="641.5" y="587.0" width="5.5" height="5.5" fill="#1818e8"/>
<rect x="765.6" y="586.8" width="5.5" height="5.5" fill="#1818e8"/>
<rect x="810.8" y="586.8" width="5.5" height="5.5" fill="#1818e8"/>
<rect x="700.8" y="605.8" width="5.5" height="5.5" fill="#1818e8"/>
<rect x="740.0" y="632.8" width="5.5" height="5.5" fill="#1818e8"/>
<rect x="850.6" y="599.6" width="5.5" height="5.5" fill="#1818e8"/>
<rect x="765.6" y="697.8" width="5.5" height="5.5" fill="#1818e8"/>
<polygon fill="none" stroke="#10106e" stroke-width="1.2" points="663.9,454.0 676.9,454.0 670.4,463.0"/>
<polyline fill="none" stroke="#10106e" stroke-width="1.2" points="663.4,463.0 677.4,463.0"/>
<polygon fill="none" stroke="#10106e" stroke-width="1.2" points="663.9,480.0 676.9,480.0 670.4,489.0"/>
<polyline fill="none" stroke="#10106e" stroke-width="1.2" points="663.4,489.0 677.4,489.0"/>
<polygon fill="none" stroke="#10106e" stroke-width="1.2" points="697.0,538.0 710.0,538.0 703.5,547.0"/>
<polyline fill="none" stroke="#10106e" stroke-width="1.2" points="696.5,547.0 710.5,547.0"/>
<polygon fill="none" stroke="#10106e" stroke-width="1.2" points="697.0,564.0 710.0,564.0 703.5,573.0"/>
<polyline fill="none" stroke="#10106e" stroke-width="1.2" points="696.5,573.0 710.5,573.0"/>
<polyline fill="none" stroke="#10106e" stroke-width="1.2" points="703.5,449.0 710.0,452.0 697.0,459.0 710.0,465.5 697.0,472.0 703.5,475.5"/>
<polyline fill="none" stroke="#10106e" stroke-width="1.2" points="670.4,520.5 676.9,523.5 663.9,530.5 676.9,537.0 663.9,543.5 670.4,547.0"/>
<polyline fill="none" stroke="#10106e" stroke-width="1.2" points="553.6,605.0 560.1,608.0 547.1,615.0 560.1,621.5 547.1,628.0 553.6,631.5"/>
<polyline fill="none" stroke="#10106e" stroke-width="1.2" points="644.3,591.0 650.8,594.0 637.8,601.0 650.8,607.5 637.8,614.0 644.3,617.5"/>
<polyline fill="none" stroke="#10106e" stroke-width="1.2" points="813.5,597.0 820.0,600.0 807.0,607.0 820.0,613.5 807.0,620.0 813.5,623.5"/>
<polyline fill="none" stroke="#10106e" stroke-width="1.2" points="667.0,589.7 670.0,583.2 677.0,596.2 683.5,583.2 690.0,596.2 693.5,589.7"/>
<polygon fill="none" stroke="#10106e" stroke-width="1.2" points="663.4,556.5 677.4,556.5 670.4,564.0"/>
<polygon fill="none" stroke="#10106e" stroke-width="1.2" points="546.6,635.0 560.6,635.0 553.6,642.5"/>
<polygon fill="none" stroke="#10106e" stroke-width="1.2" points="637.3,628.0 651.3,628.0 644.3,635.5"/>
<polygon fill="none" stroke="#10106e" stroke-width="1.2" points="806.5,635.0 820.5,635.0 813.5,642.5"/>
<polygon fill="none" stroke="#10106e" stroke-width="1.2" points="865.6,615.0 879.6,615.0 872.6,622.5"/>
<polygon fill="none" stroke="#10106e" stroke-width="1.2" points="481.5,674.5 495.5,674.5 488.5,682.0"/>
<rect x="681.3" y="494.5" width="2.4" height="20" fill="none" stroke="#10106e" stroke-width="1"/>
<polyline fill="none" stroke="#10106e" stroke-width="1.2" points="684.0,497.7 703.3,485.7"/>
<polygon fill="none" stroke="#10106e" stroke-width="1.2" points="684.5,497.0 691.5,489.0 695.5,493.5"/>
<polyline fill="none" stroke="#10106e" stroke-width="1.2" points="684.0,512.0 703.4,524.0"/>
<rect x="746.5" y="553" width="2.6" height="20.5" fill="#10106e"/>
<polyline fill="none" stroke="#10106e" stroke-width="1.2" points="749.0,556.0 768.4,543.4"/>
<polyline fill="none" stroke="#10106e" stroke-width="1.2" points="750.0,570.0 768.4,582.5"/>
<polygon fill="none" stroke="#10106e" stroke-width="1.2" points="768.0,582.0 756.0,579.5 760.0,574.0"/>
<rect x="746.5" y="625" width="2.6" height="19.5" fill="#10106e"/>
<polyline fill="none" stroke="#10106e" stroke-width="1.2" points="750.0,628.0 768.4,615.8"/>
<polygon fill="none" stroke="#10106e" stroke-width="1.2" points="750.0,628.0 757.0,619.5 761.0,625.0"/>
<polyline fill="none" stroke="#10106e" stroke-width="1.2" points="750.0,641.0 768.4,654.0"/>
<rect x="721.8" y="625.8" width="2.4" height="18.6" fill="none" stroke="#10106e" stroke-width="1"/>
<polyline fill="none" stroke="#10106e" stroke-width="1.2" points="722.0,629.0 703.3,615.8"/>
<polyline fill="none" stroke="#10106e" stroke-width="1.2" points="722.0,641.0 703.4,655.0"/>
<polygon fill="none" stroke="#10106e" stroke-width="1.2" points="703.6,654.5 715.5,651.5 711.5,645.5"/>
<polyline fill="none" stroke="#10106e" stroke-width="1.2" points="724.0,602.0 724.0,614.5"/>
<polyline fill="none" stroke="#10106e" stroke-width="1.2" points="724.0,602.0 721.5,602.0 721.5,604.0"/>
<polyline fill="none" stroke="#10106e" stroke-width="1.2" points="724.0,614.5 726.5,614.5 726.5,612.5"/>
<polygon fill="none" stroke="#10106e" stroke-width="1.2" points="724.0,608.3 735.0,602.0 735.0,614.5"/>
<polyline fill="none" stroke="#10106e" stroke-width="1.6" points="519.5,583.0 519.5,596.0"/>
<polyline fill="none" stroke="#10106e" stroke-width="1.6" points="523.5,583.0 523.5,596.0"/>
<polygon fill="none" stroke="#10106e" stroke-width="1.2" points="611.0,654.5 611.0,681.0 638.0,667.5"/>
<polyline fill="none" stroke="#10106e" stroke-width="1.2" points="613.5,661.5 618.5,661.5"/>
<polyline fill="none" stroke="#10106e" stroke-width="1.2" points="613.5,674.5 618.5,674.5"/>
<polyline fill="none" stroke="#10106e" stroke-width="1.2" points="616.0,672.0 616.0,677.0"/>
<polyline fill="none" stroke="#10106e" stroke-width="1.2" points="624.0,658.0 629.0,658.0"/>
<polyline fill="none" stroke="#10106e" stroke-width="1.2" points="626.5,655.5 626.5,660.5"/>
<polyline fill="none" stroke="#10106e" stroke-width="1.2" points="625.0,677.0 630.0,677.0"/>
<circle cx="853.4" cy="467.8" r="13.3" fill="none" stroke="#10106e" stroke-width="1.1"/>
<polyline fill="none" stroke="#10106e" stroke-width="1.2" points="849.5,461.3 857.5,461.3"/>
<polyline fill="none" stroke="#10106e" stroke-width="1.2" points="853.4,457.3 853.4,465.3"/>
<polyline fill="none" stroke="#10106e" stroke-width="1.2" points="849.5,475.8 857.5,475.8"/>
<circle cx="853.4" cy="663.8" r="13.3" fill="none" stroke="#10106e" stroke-width="1.1"/>
<polyline fill="none" stroke="#10106e" stroke-width="1.2" points="849.5,657.3 857.5,657.3"/>
<polyline fill="none" stroke="#10106e" stroke-width="1.2" points="853.4,653.3 853.4,661.3"/>
<polyline fill="none" stroke="#10106e" stroke-width="1.2" points="849.5,671.8 857.5,671.8"/>
<circle cx="488.5" cy="650.5" r="12.5" fill="none" stroke="#10106e" stroke-width="1.1"/>
<path d="M480.5,650 C482.5,643 486.5,643 488.5,650 C490.5,657 494.5,657 496.5,650" fill="none" stroke="#10106e" stroke-width="1.1"/>
<polyline fill="none" stroke="#10106e" stroke-width="1.2" points="488.5,634.5 488.5,641.0"/>
<polyline fill="none" stroke="#10106e" stroke-width="1.2" points="488.5,659.5 488.5,665.0"/>
<polygon fill="none" stroke="#10106e" stroke-width="1.2" points="826.0,584.0 846.0,584.0 851.5,589.7 846.0,595.5 826.0,595.5"/>
<g font-family="Liberation Sans" fill="#000" letter-spacing="-0.25">
<text x="655.0" y="449.5" font-size="9.6" text-anchor="start" stroke="#000" stroke-width="0.15">D6</text>
<text x="711.5" y="459.0" font-size="9.6" text-anchor="start" stroke="#000" stroke-width="0.15">R4</text>
<text x="711.0" y="472.0" font-size="9.6" text-anchor="start" stroke="#000" stroke-width="0.15">62</text>
<text x="655.0" y="474.5" font-size="9.6" text-anchor="start" stroke="#000" stroke-width="0.15">D7</text>
<text x="640.0" y="478.0" font-size="9.6" text-anchor="start" stroke="#000" stroke-width="0.15">1N914</text>
<text x="640.0" y="505.0" font-size="9.6" text-anchor="start" stroke="#000" stroke-width="0.15">1N914</text>
<text x="711.0" y="500.0" font-size="9.6" text-anchor="start" stroke="#000" stroke-width="0.15">2N2907</text>
<text x="711.0" y="515.0" font-size="9.6" text-anchor="start" stroke="#000" stroke-width="0.15">Q6</text>
<text x="678.0" y="529.0" font-size="9.6" text-anchor="start" stroke="#000" stroke-width="0.15">R9</text>
<text x="678.0" y="546.0" font-size="9.6" text-anchor="start" stroke="#000" stroke-width="0.15">10K</text>
<text x="706.0" y="534.0" font-size="9.6" text-anchor="start" stroke="#000" stroke-width="0.15">D4</text>
<text x="706.0" y="560.0" font-size="9.6" text-anchor="start" stroke="#000" stroke-width="0.15">D5</text>
<text x="705.0" y="564.0" font-size="9.6" text-anchor="start" stroke="#000" stroke-width="0.15">1N914</text>
<text x="675.0" y="579.5" font-size="9.6" text-anchor="start" stroke="#000" stroke-width="0.15">R6</text>
<text x="672.0" y="603.0" font-size="9.6" text-anchor="start" stroke="#000" stroke-width="0.15">470</text>
<text x="706.0" y="590.0" font-size="9.6" text-anchor="start" stroke="#000" stroke-width="0.15">1N914</text>
<text x="652.5" y="603.5" font-size="9.6" text-anchor="start" stroke="#000" stroke-width="0.15">R7</text>
<text x="652.0" y="616.5" font-size="9.6" text-anchor="start" stroke="#000" stroke-width="0.15">47</text>
<text x="724.0" y="600.0" font-size="9.6" text-anchor="start" stroke="#000" stroke-width="0.15">D1</text>
<text x="716.0" y="623.0" font-size="9.6" text-anchor="start" stroke="#000" stroke-width="0.15">BAT54</text>
<text x="695.0" y="632.0" font-size="9.6" text-anchor="start" stroke="#000" stroke-width="0.15">Q4</text>
<text x="668.5" y="646.5" font-size="9.6" text-anchor="start" stroke="#000" stroke-width="0.15">2N2219A</text>
<text x="766.0" y="560.0" font-size="9.6" text-anchor="start" stroke="#000" stroke-width="0.15">Q1</text>
<text x="765.0" y="575.0" font-size="9.6" text-anchor="start" stroke="#000" stroke-width="0.15">2N3019</text>
<text x="776.0" y="630.0" font-size="9.6" text-anchor="start" stroke="#000" stroke-width="0.15">2P3019</text>
<text x="777.0" y="645.0" font-size="9.6" text-anchor="start" stroke="#000" stroke-width="0.15">Q2</text>
<text x="821.5" y="608.0" font-size="9.6" text-anchor="start" stroke="#000" stroke-width="0.15">R5</text>
<text x="822.0" y="623.0" font-size="9.6" text-anchor="start" stroke="#000" stroke-width="0.15">8</text>
<text x="632.0" y="657.0" font-size="9.6" text-anchor="start" stroke="#000" stroke-width="0.15">U1</text>
<text x="631.5" y="684.0" font-size="9.6" text-anchor="start" stroke="#000" stroke-width="0.15">LT1813</text>
<text x="862.0" y="456.0" font-size="9.6" text-anchor="start" stroke="#000" stroke-width="0.15">V1</text>
<text x="862.0" y="491.5" font-size="9.6" text-anchor="start" stroke="#000" stroke-width="0.15">15</text>
<text x="861.5" y="652.5" font-size="9.6" text-anchor="start" stroke="#000" stroke-width="0.15">V2</text>
<text x="861.5" y="686.0" font-size="9.6" text-anchor="start" stroke="#000" stroke-width="0.15">15</text>
<text x="515.0" y="580.0" font-size="9.6" text-anchor="start" stroke="#000" stroke-width="0.15">C3</text>
<text x="511.0" y="602.5" font-size="9.6" text-anchor="start" stroke="#000" stroke-width="0.15">2μ2</text>
<text x="561.5" y="615.5" font-size="9.6" text-anchor="start" stroke="#000" stroke-width="0.15">R2</text>
<text x="560.5" y="629.5" font-size="9.6" text-anchor="start" stroke="#000" stroke-width="0.15">22K</text>
<text x="496.5" y="639.5" font-size="9.6" text-anchor="start" stroke="#000" stroke-width="0.15">V3</text>
<text x="497.0" y="685.5" font-size="9.6" text-anchor="start" stroke="#000" stroke-width="0.15">AC 1</text>
<text x="827.5" y="593.5" font-size="9.6" text-anchor="start" stroke="#000" stroke-width="0.15">out</text>
<text x="515.0" y="662.5" font-size="9.6" stroke="#000" stroke-width="0.15" textLength="70.0" lengthAdjust="spacing">.tran 0 0.01 0 1μ</text>
<text x="497.0" y="674.0" font-size="9.6" stroke="#000" stroke-width="0.15" textLength="64.5" lengthAdjust="spacing">SINE(0 0.5 1K)</text>
<text x="485.5" y="697.5" font-size="9.6" stroke="#000" stroke-width="0.15" textLength="63.5" lengthAdjust="spacing">.four 1k v(out)</text>
<text x="474.5" y="707.0" font-size="9.6" stroke="#000" stroke-width="0.15" textLength="103.5" lengthAdjust="spacing">;ac dec 1000 10 10000K</text>
</g>
</svg>

<!-- log window -->
<div class="a" style="left:2px;top:413px;width:472px;height:313px;background:#d4d0c8"></div>
<div class="a" style="left:3px;top:414px;width:469px;height:1px;background:#fff"></div>
<div class="a" style="left:3px;top:414px;width:1px;height:310px;background:#fff"></div>
<div class="a" style="left:472px;top:413px;width:1px;height:312px;background:#808080"></div>
<div class="a" style="left:473px;top:413px;width:1px;height:313px;background:#404040"></div>
<div class="a" style="left:2px;top:724px;width:471px;height:1px;background:#808080"></div>
<div class="a" style="left:2px;top:725px;width:472px;height:1px;background:#404040"></div>
<div class="a" style="left:6px;top:418px;width:463px;height:18px;background:linear-gradient(to right,#0a246a,#a6caf0)"></div>
<div class="t" style="left:25px;top:421px;font-weight:bold;font-size:12px;letter-spacing:-0.1px;color:#fff">SPICE Error Log: C:\Program Files\LTC\SwCADIII\homebrew\PureBe.log</div>
<div class="a" style="left:6px;top:437px;width:464px;height:284px;background:#fff"></div>
<div class="a" style="left:6px;top:437px;width:462px;height:282px;background:#808080"></div>
<div class="a" style="left:7px;top:438px;width:461px;height:281px;background:#404040"></div>
<div class="a" style="left:8px;top:439px;width:444px;height:265px;background:#fff;overflow:hidden">
<pre class="mono" style="position:absolute;left:2px;top:-5px;margin:0;font-size:13.45px;line-height:17px;color:#000">DC component:0.207209

Harmonic           Frequency           Fourier
 Number              [Hz]             Component
    1              1.000e+03          5.480e+00
    2              2.000e+03          6.056e-05
    3              3.000e+03          2.030e-05
    4              4.000e+03          4.288e-05
    5              5.000e+03          3.325e-05
    6              6.000e+03          2.100e-05
    7              7.000e+03          1.930e-05
    8              8.000e+03          1.637e-05
    9              9.000e+03          1.478e-05
Total Harmonic Distortion: 0.001665%</pre>
</div>

<svg class="a" style="left:2px;top:2px" width="16" height="15" viewBox="0 0 16 15"><rect width="16" height="15" fill="#d0d4d0"/><path d="M7,3 h2.2 l-4.5,7.5 l2.8,2.5 h-6.5 l2,-2z M9.2,3 h6.8 l-3,4 l-4,6 l-1,-0.5 l3.5,-6.5z" fill="#a00010"/></svg>
<div class="a" style="left:972px;top:2px;width:16px;height:14px;background:#d4d0c8;border-top:1px solid #fff;border-left:1px solid #fff;border-right:1px solid #404040;border-bottom:1px solid #404040;box-shadow:inset -1px -1px 0 #808080"><svg class="a" style="left:0;top:0" width="14" height="12"><rect x="4" y="8" width="6" height="2" fill="#000"/></svg></div>
<div class="a" style="left:988px;top:2px;width:16px;height:14px;background:#d4d0c8;border-top:1px solid #fff;border-left:1px solid #fff;border-right:1px solid #404040;border-bottom:1px solid #404040;box-shadow:inset -1px -1px 0 #808080"><svg class="a" style="left:0;top:0" width="14" height="12"><path d="M5.5,1.5h6v5h-2 M5.5,1.5v2" fill="none" stroke="#000"/><rect x="5" y="1" width="7" height="2" fill="#000"/><rect x="2.5" y="5.5" width="6" height="5" fill="none" stroke="#000"/><rect x="2" y="5" width="7" height="2" fill="#000"/></svg></div>
<div class="a" style="left:1005px;top:2px;width:16px;height:14px;background:#d4d0c8;border-top:1px solid #fff;border-left:1px solid #fff;border-right:1px solid #404040;border-bottom:1px solid #404040;box-shadow:inset -1px -1px 0 #808080"><svg class="a" style="left:0;top:0" width="14" height="12"><path d="M3.5,2.5 l7,7 M10.5,2.5 l-7,7" stroke="#000" stroke-width="1.6"/></svg></div>
<div class="t" style="left:6px;top:23px;font-size:11px"><u>F</u>ile</div>
<div class="t" style="left:34px;top:23px;font-size:11px"><u>E</u>dit</div>
<div class="t" style="left:64px;top:23px;font-size:11px">H<u>i</u>erarchy</div>
<div class="t" style="left:121px;top:23px;font-size:11px"><u>V</u>iew</div>
<div class="t" style="left:155px;top:23px;font-size:11px"><u>S</u>imulate</div>
<div class="t" style="left:207px;top:23px;font-size:11px"><u>T</u>ools</div>
<div class="t" style="left:244px;top:23px;font-size:11px"><u>W</u>indow</div>
<div class="t" style="left:294px;top:23px;font-size:11px"><u>H</u>elp</div>
<div class="a" style="left:2px;top:70px;width:93px;height:22px;background:#d4d0c8;border-top:1px solid #fff;border-left:1px solid #fff;border-right:1px solid #404040;box-shadow:inset -1px 0 0 #808080"></div>
<div class="a" style="left:95px;top:72px;width:87px;height:19px;background:#d4d0c8;border-top:1px solid #fff;border-right:1px solid #404040;box-shadow:inset -1px 0 0 #808080"></div>
<div class="a" style="left:0;top:91px;width:2px;height:1px;background:#fff"></div>
<div class="a" style="left:95px;top:91px;width:929px;height:1px;background:#fff"></div>
<svg class="a" style="left:10px;top:71px" width="14" height="19"><path d="M5.5,2.5 v12 M1.5,8.5 h4 M5.5,5.5 l6,-4.5 M5.5,11.5 l6,5.5" stroke="#0000e0" stroke-width="1.6" fill="none"/><path d="M13,18 l-4.5,-1 l2,-2.5z" fill="#0000e0"/></svg>
<div class="t" style="left:33px;top:77px;font-size:11px;letter-spacing:-0.3px">PureBe.asc</div>
<svg class="a" style="left:99px;top:72px" width="17" height="17"><path d="M3,1v13h13" fill="none" stroke="#000" stroke-width="1.5"/><path d="M0,2h3M0,4.5h3M0,7h3M0,9.5h3M0,12h3M5,14v3M7.5,14v3M10,14v3M12.5,14v3M15,14v3" stroke="#000" stroke-width="1"/><path d="M4,9 l3,-4 l3,3 l3,-3 l3,-2" fill="none" stroke="#e00000" stroke-width="1.5"/></svg>
<div class="t" style="left:122px;top:77px;font-size:11px;letter-spacing:-0.3px">PureBe.raw</div>
<svg class="a" style="left:8px;top:102px" width="17" height="17"><rect x="3" y="0" width="13" height="13" fill="#c8d0c8"/><path d="M3,0v13.5h13.5" fill="none" stroke="#000" stroke-width="1.5"/><path d="M0,1h3M0,3.5h3M0,6h3M0,8.5h3M0,11h3M5,13v3M7.5,13v3M10,13v3M12.5,13v3M15,13v3" stroke="#000" stroke-width="1"/><path d="M4,8 l3,-3 l3,3 l3,-2.5 l3,-3" fill="none" stroke="#e00010" stroke-width="1.6"/></svg>
<div class="t" style="left:26px;top:104px;font-weight:bold;font-size:12px;letter-spacing:-0.3px;color:#d4d0c8">PureBe.raw</div>
<div class="a" style="left:966px;top:103px;width:16px;height:14px;background:#d4d0c8;border-top:1px solid #fff;border-left:1px solid #fff;border-right:1px solid #404040;border-bottom:1px solid #404040;box-shadow:inset -1px -1px 0 #808080"><svg class="a" style="left:0;top:0" width="14" height="12"><rect x="4" y="8" width="6" height="2" fill="#000"/></svg></div>
<div class="a" style="left:982px;top:103px;width:16px;height:14px;background:#d4d0c8;border-top:1px solid #fff;border-left:1px solid #fff;border-right:1px solid #404040;border-bottom:1px solid #404040;box-shadow:inset -1px -1px 0 #808080"><svg class="a" style="left:0;top:0" width="14" height="12"><rect x="2.5" y="1.5" width="9" height="8" fill="none" stroke="#000"/><rect x="2" y="1" width="10" height="2" fill="#000"/></svg></div>
<div class="a" style="left:999px;top:103px;width:16px;height:14px;background:#d4d0c8;border-top:1px solid #fff;border-left:1px solid #fff;border-right:1px solid #404040;border-bottom:1px solid #404040;box-shadow:inset -1px -1px 0 #808080"><svg class="a" style="left:0;top:0" width="14" height="12"><path d="M3.5,2.5 l7,7 M10.5,2.5 l-7,7" stroke="#000" stroke-width="1.6"/></svg></div>
<svg class="a" style="left:8px;top:419px" width="16" height="16"><path d="M1,6 l3,2 l3,-2 l3,2 M1,9 l3,2 l3,-2 l3,2" stroke="#800080" fill="none"/><rect x="10" y="3" width="3" height="3" fill="#e02020"/><rect x="13" y="6" width="3" height="3" fill="#20c020"/><rect x="11" y="10" width="3" height="3" fill="#e0e020"/></svg>
<div class="a" style="left:452px;top:420px;width:16px;height:14px;background:#d4d0c8;border-top:1px solid #fff;border-left:1px solid #fff;border-right:1px solid #404040;border-bottom:1px solid #404040;box-shadow:inset -1px -1px 0 #808080"><svg class="a" style="left:0;top:0" width="14" height="12"><path d="M3.5,2.5 l7,7 M10.5,2.5 l-7,7" stroke="#000" stroke-width="1.6"/></svg></div>
<div class="a" style="left:452px;top:439px;width:16px;height:265px;background-color:#eae8e4;background-image:repeating-conic-gradient(#fff 0 25%,#d4d0c8 0 50%);background-size:2px 2px"></div>
<div class="a" style="left:452px;top:439px;width:16px;height:16px;background:#d4d0c8;border-top:1px solid #fff;border-left:1px solid #fff;border-right:1px solid #404040;border-bottom:1px solid #404040;box-shadow:inset -1px -1px 0 #808080"><svg class="a" style="left:0;top:0" width="14" height="14"><path d="M3.5,9 h7 l-3.5,-4z" fill="#000"/></svg></div>
<div class="a" style="left:452px;top:555px;width:16px;height:64px;background:#d4d0c8;border-top:1px solid #fff;border-left:1px solid #fff;border-right:1px solid #404040;border-bottom:1px solid #404040;box-shadow:inset -1px -1px 0 #808080"><svg class="a" style="left:0;top:0" width="14" height="62"></svg></div>
<div class="a" style="left:452px;top:688px;width:16px;height:16px;background:#d4d0c8;border-top:1px solid #fff;border-left:1px solid #fff;border-right:1px solid #404040;border-bottom:1px solid #404040;box-shadow:inset -1px -1px 0 #808080"><svg class="a" style="left:0;top:0" width="14" height="14"><path d="M3.5,5 h7 l-3.5,4z" fill="#000"/></svg></div>
<div class="a" style="left:8px;top:704px;width:444px;height:16px;background-color:#eae8e4;background-image:repeating-conic-gradient(#fff 0 25%,#d4d0c8 0 50%);background-size:2px 2px"></div>
<div class="a" style="left:8px;top:704px;width:16px;height:16px;background:#d4d0c8;border-top:1px solid #fff;border-left:1px solid #fff;border-right:1px solid #404040;border-bottom:1px solid #404040;box-shadow:inset -1px -1px 0 #808080"><svg class="a" style="left:0;top:0" width="14" height="14"><path d="M9,3 v7 l-4,-3.5z" fill="#000"/></svg></div>
<div class="a" style="left:24px;top:704px;width:211px;height:16px;background:#d4d0c8;border-top:1px solid #fff;border-left:1px solid #fff;border-right:1px solid #404040;border-bottom:1px solid #404040;box-shadow:inset -1px -1px 0 #808080"><svg class="a" style="left:0;top:0" width="209" height="14"></svg></div>
<div class="a" style="left:436px;top:704px;width:16px;height:16px;background:#d4d0c8;border-top:1px solid #fff;border-left:1px solid #fff;border-right:1px solid #404040;border-bottom:1px solid #404040;box-shadow:inset -1px -1px 0 #808080"><svg class="a" style="left:0;top:0" width="14" height="14"><path d="M5,3 v7 l4,-3.5z" fill="#000"/></svg></div>
<div class="a" style="left:452px;top:704px;width:16px;height:16px;background:#d4d0c8"><svg width="16" height="16"><path d="M15,4 l-11,11 M15,8 l-7,7 M15,12 l-3,3" stroke="#808080" stroke-width="1"/><path d="M15,5 l-10,10 M15,9 l-6,6 M15,13 l-2,2" stroke="#fff" stroke-width="1"/></svg></div>
<div class="a" style="left:973px;top:724px;width:49px;height:16px;border-top:1px solid #808080;border-left:1px solid #808080;border-right:1px solid #fff;border-bottom:1px solid #fff"></div>
<!-- status bar -->
<div class="t" style="left:2px;top:728px;font-size:11px">Ready</div>

<!-- taskbar -->
<div class="a" style="left:0;top:741px;width:1024px;height:27px;background:#d4d0c8;border-top:1px solid #d4d0c8;box-shadow:inset 0 1px 0 #fff"></div>
<div class="a" style="left:2px;top:744px;width:55px;height:22px;background:#d4d0c8;border-top:1px solid #fff;border-left:1px solid #fff;border-right:1px solid #404040;border-bottom:1px solid #404040;box-shadow:inset -1px -1px 0 #808080"><svg class="a" style="left:3px;top:3px" width="18" height="16"><path d="M6,3 q3,-2 5,0 v6 q-2,-2 -5,0z" fill="#e03010"/><path d="M11,3 q3,2 5,0 v6 q-2,2 -5,0z" fill="#30b030"/><path d="M6,9 q3,-2 5,0 v6 q-2,-2 -5,0z" fill="#1030e0"/><path d="M11,9 q3,2 5,0 v6 q-2,2 -5,0z" fill="#f0d010"/><path d="M5.5,2.5 q3,-2 5.5,0 q3,2 5.5,0 v13 q-3,2 -5.5,0 q-2.5,-2 -5.5,0z" fill="none" stroke="#000" stroke-width="1"/><path d="M0,6h5M0,9h5M0,12h5" stroke="#e04040" stroke-dasharray="1,1"/><path d="M1,7h4M1,10h4M1,13h4" stroke="#2040e0" stroke-dasharray="1,1"/></svg><div class="t" style="left:22px;top:5px;font-weight:bold;font-size:12px">Start</div></div>
<div class="a" style="left:60px;top:745px;width:1px;height:20px;background:#808080"></div><div class="a" style="left:61px;top:745px;width:1px;height:20px;background:#fff"></div>
<div class="a" style="left:64px;top:746px;width:3px;height:18px;border-top:1px solid #fff;border-left:1px solid #fff;border-right:1px solid #808080;border-bottom:1px solid #808080"></div>
<svg class="a" style="left:74px;top:747px" width="16" height="16"><rect x="0.5" y="1.5" width="15" height="14" fill="#40a8b0" stroke="#000"/><rect x="1.5" y="2.5" width="13" height="12" fill="#e8f0f0"/><path d="M1.5,2.5 l3,3 M14.5,14.5 l-3,-3 M1.5,14.5 l3,-3" stroke="#40a0a8" stroke-width="2"/><rect x="4" y="6" width="6" height="7" fill="#fff" stroke="#000"/><path d="M6,9 l8,-9" stroke="#e0b020" stroke-width="2"/><path d="M6,9 l1,-2" stroke="#000"/></svg>
<svg class="a" style="left:97px;top:747px" width="16" height="16"><rect x="0.5" y="2.5" width="14" height="11" fill="#f0e890" stroke="#000"/><circle cx="6" cy="6.5" r="3.5" fill="#90d8f0" stroke="#000" stroke-width="1.3"/><path d="M8.5,9 l5,5" stroke="#1040c0" stroke-width="2.2"/></svg>
<svg class="a" style="left:120px;top:747px" width="16" height="16"><rect x="0" y="0" width="16" height="16" fill="#808018"/><circle cx="8" cy="8" r="4.5" fill="#f8f8b0" stroke="#f8f8b0" stroke-width="1"/><path d="M8,5v3.5h2.5" stroke="#808018" stroke-width="1.5" fill="none"/><path d="M1,1h3M1,1v3M15,1h-3M15,1v3M1,15h3M1,15v-3M15,15h-3M15,15v-3" stroke="#f8f8b0" stroke-width="1.2"/></svg>
<svg class="a" style="left:144px;top:747px" width="16" height="16"><rect x="2.5" y="1.5" width="13" height="12" fill="#e8eef8" stroke="#606880"/><rect x="3" y="2" width="12" height="2.5" fill="#7090d0"/><rect x="3" y="2" width="2.5" height="2.5" fill="#1020a0"/><path d="M6,7h7M6,9h7M6,11h7" stroke="#90a0c0"/><path d="M0.5,15.5 l6,-6" stroke="#d06020" stroke-width="1.5"/></svg>
<svg class="a" style="left:166px;top:747px" width="16" height="16"><circle cx="8.5" cy="8" r="7" fill="#2060b0"/><path d="M3,9 q2,-5 7,-4 q3,1 3,4 q-3,4 -8,3z" fill="#f0e8d0"/><path d="M2,10 l5,5" stroke="#103070" stroke-width="1.5"/><circle cx="10" cy="8" r="1" fill="#000"/></svg>
<svg class="a" style="left:189px;top:747px" width="16" height="16"><circle cx="8" cy="8" r="7.5" fill="#e8701a"/><circle cx="9" cy="7.5" r="4.8" fill="#3060b0"/><path d="M7,4 l3,1 l-1,3 l2,2" fill="none" stroke="#70a0e0" stroke-width="1.2"/><path d="M0.5,8 q1,8 9,7.5 q-6,-1 -6.5,-6.5 l2,-3.5z" fill="#f5a020"/></svg>
<svg class="a" style="left:212px;top:747px" width="16" height="16"><rect x="0.5" y="3.5" width="15" height="9" fill="#f8f8d8" stroke="#000"/><path d="M1,6 l4,-4 v3 h6" stroke="#2050d0" stroke-width="2" fill="none"/><path d="M15,11 l-4,4 v-3 h-5" stroke="#2050d0" stroke-width="2" fill="none"/><rect x="12" y="5" width="2" height="2" fill="#e02020"/></svg>
<svg class="a" style="left:235px;top:747px" width="16" height="16"><circle cx="8" cy="8" r="6.5" fill="none" stroke="#40a040" stroke-width="2.5"/><path d="M2,6 a6.5,6.5 0 0,1 6,-4.5" stroke="#e04020" stroke-width="2.5" fill="none"/><path d="M2,9 a6.5,6.5 0 0,0 6,5.5" stroke="#2060e0" stroke-width="2.5" fill="none"/><circle cx="8" cy="8" r="4" fill="#f0f0f0"/><path d="M6.5,5 l4,3 l-4,3z" fill="#000"/></svg>
<svg class="a" style="left:259px;top:747px" width="16" height="16"><circle cx="7" cy="7.5" r="6.5" fill="#30a0e0" stroke="#1060b0"/><circle cx="7" cy="7.5" r="3.8" fill="#d0e8f8"/><path d="M6,9 l3,-3" stroke="#104080" stroke-width="1.5"/><rect x="3" y="13" width="10" height="2" fill="#1070c0"/></svg>
<svg class="a" style="left:282px;top:747px" width="16" height="16"><path d="M2,6 l6,-5 l7,5 l-6,9 l-7,-3z" fill="#f0f0f8"/><path d="M8,1 l7,5 l-4,3 l-5,-4z" fill="#3050c0"/><path d="M2,8 l4,-3 l5,4 l-3,6z" fill="#3050c0" opacity="0.85"/><path d="M11,9 l4,-3 v4 l-6,5z" fill="#c0d0f0"/></svg>
<svg class="a" style="left:304px;top:747px" width="16" height="16"><rect x="0.5" y="0.5" width="15" height="15" fill="#fff"/><path d="M1,1 h5 l-5,8z" fill="#7030d0"/><path d="M6,1 h4 v6z" fill="#e01020"/><rect x="11" y="2" width="4" height="8" fill="#f07010"/><path d="M1,9 l5,-7 v13 h-5z" fill="#2040c0" opacity="0"/><rect x="1" y="10" width="4" height="5" fill="#2040c0"/><rect x="6" y="11" width="9" height="4" fill="#20a030"/></svg>
<div class="t" style="left:333px;top:746px;font-weight:bold;font-size:14px">&#187;</div>
<div class="a" style="left:345px;top:745px;width:1px;height:20px;background:#808080"></div><div class="a" style="left:346px;top:745px;width:1px;height:20px;background:#fff"></div>
<div class="a" style="left:349px;top:746px;width:3px;height:18px;border-top:1px solid #fff;border-left:1px solid #fff;border-right:1px solid #808080;border-bottom:1px solid #808080"></div>
<div class="a" style="left:356px;top:744px;width:61px;height:22px;background:#d4d0c8;border-top:1px solid #fff;border-left:1px solid #fff;border-right:1px solid #404040;border-bottom:1px solid #404040;box-shadow:inset -1px -1px 0 #808080"><svg class="a" style="left:3px;top:2px" width="16" height="16"><circle cx="8" cy="8" r="7.5" fill="#e06a10"/><circle cx="9" cy="7" r="5" fill="#2a5cb8"/><path d="M0.5,8 q1,8 9,7.5 q-6,-1 -6,-6 l2,-3z" fill="#f59a20"/></svg><div class="t" style="left:21px;top:5px;font-size:11px;font-weight:normal">Foru...</div></div>
<div class="a" style="left:420px;top:744px;width:60px;height:22px;background-color:#f4f3f0;background-image:repeating-conic-gradient(#fff 0 25%,#d4d0c8 0 50%);background-size:2px 2px;border-top:1px solid #404040;border-left:1px solid #404040;border-right:1px solid #fff;border-bottom:1px solid #fff;box-shadow:inset 1px 1px 0 #808080"><svg class="a" style="left:3px;top:2px" width="16" height="16"><rect width="16" height="16" fill="#c8c8c8"/><path d="M7,3 h2.2 l-4.5,7.5 l2.8,2.5 h-6.5 l2,-2z M9.2,3 h6.8 l-3,4 l-4,6 l-1,-0.5 l3.5,-6.5z" fill="#a00010"/></svg><div class="t" style="left:21px;top:5px;font-size:11px;font-weight:bold">Line...</div></div>
<div class="a" style="left:484px;top:744px;width:61px;height:22px;background:#d4d0c8;border-top:1px solid #fff;border-left:1px solid #fff;border-right:1px solid #404040;border-bottom:1px solid #404040;box-shadow:inset -1px -1px 0 #808080"><svg class="a" style="left:3px;top:2px" width="16" height="16"><rect x="3.5" y="7.5" width="11" height="8" fill="#fff" stroke="#000"/><path d="M4,7 l3,-6 l3,6" fill="#e02020" stroke="#000"/><path d="M9,7 l4,-5" stroke="#2040c0" stroke-width="2"/></svg><div class="t" style="left:21px;top:5px;font-size:11px;font-weight:normal">versi...</div></div>
<div class="a" style="left:548px;top:744px;width:61px;height:22px;background:#d4d0c8;border-top:1px solid #fff;border-left:1px solid #fff;border-right:1px solid #404040;border-bottom:1px solid #404040;box-shadow:inset -1px -1px 0 #808080"><svg class="a" style="left:3px;top:2px" width="16" height="16"><circle cx="8" cy="8" r="7.5" fill="#e06a10"/><circle cx="9" cy="7" r="5" fill="#2a5cb8"/><path d="M0.5,8 q1,8 9,7.5 q-6,-1 -6,-6 l2,-3z" fill="#f59a20"/></svg><div class="t" style="left:21px;top:5px;font-size:11px;font-weight:normal">Linea...</div></div>
<div class="a" style="left:612px;top:744px;width:61px;height:22px;background:#d4d0c8;border-top:1px solid #fff;border-left:1px solid #fff;border-right:1px solid #404040;border-bottom:1px solid #404040;box-shadow:inset -1px -1px 0 #808080"><svg class="a" style="left:3px;top:2px" width="16" height="16"><circle cx="8" cy="8" r="7.5" fill="#e06a10"/><circle cx="9" cy="7" r="5" fill="#2a5cb8"/><path d="M0.5,8 q1,8 9,7.5 q-6,-1 -6,-6 l2,-3z" fill="#f59a20"/></svg><div class="t" style="left:21px;top:5px;font-size:11px;font-weight:normal">NE55...</div></div>
<div class="a" style="left:676px;top:744px;width:61px;height:22px;background:#d4d0c8;border-top:1px solid #fff;border-left:1px solid #fff;border-right:1px solid #404040;border-bottom:1px solid #404040;box-shadow:inset -1px -1px 0 #808080"><svg class="a" style="left:3px;top:2px" width="16" height="16"><rect x="1.5" y="1.5" width="13" height="13" fill="#fff" stroke="#c00"/><path d="M3,14 l4,-8 l2,4 l3,-8 l2,12z" fill="#e01010"/></svg><div class="t" style="left:21px;top:5px;font-size:11px;font-weight:normal">Adob...</div></div>
<div class="a" style="left:747px;top:745px;width:1px;height:20px;background:#808080"></div><div class="a" style="left:748px;top:745px;width:1px;height:20px;background:#fff"></div>
<div class="a" style="left:750px;top:746px;width:3px;height:18px;border-top:1px solid #fff;border-left:1px solid #fff;border-right:1px solid #808080;border-bottom:1px solid #808080"></div>
<div class="t" style="left:757px;top:750px;font-size:11px">Desktop</div>
<svg class="a" style="left:806px;top:747px" width="16" height="16"><path d="M0.5,6.5 h14 v8 h-14z" fill="#f0e070" stroke="#806000"/><path d="M3,6 l5,-5 l5,5" fill="#a0d0f0" stroke="#4080c0"/><path d="M0.5,14.5 l2,-6 h13 l-2,6z" fill="#f8f0a0" stroke="#806000"/></svg>
<div class="t" style="left:826px;top:746px;font-weight:bold;font-size:14px">&#187;</div>
<div class="a" style="left:838px;top:744px;width:183px;height:22px;border-top:1px solid #808080;border-left:1px solid #808080;border-right:1px solid #fff;border-bottom:1px solid #fff"></div>
<svg class="a" style="left:843px;top:747px" width="16" height="16"><path d="M1,5 h4 l5,-4 v14 l-5,-4 h-4z" fill="#f0f080" stroke="#000"/><path d="M12,5 l2,-1 M12,8 h3 M12,11 l2,1" stroke="#a0a0a0"/></svg>
<svg class="a" style="left:860px;top:747px" width="16" height="16"><path d="M3,3 l5,-2 l6,3 v8 l-5,3 l-6,-3z" fill="#808080" stroke="#000"/><rect x="6" y="5" width="5" height="6" fill="#e0e0e0" stroke="#000"/></svg>
<div class="a" style="left:878px;top:747px;width:16px;height:16px;background:#0a1a80;color:#fff;font-size:11px;line-height:16px;text-align:center">FR</div>
<svg class="a" style="left:897px;top:747px" width="16" height="16"><path d="M2,9 l6,-7 l6,4 l-6,8z" fill="#e8e8e8" stroke="#404040"/><path d="M4,10 l4,4 l6,-7" fill="none" stroke="#404040"/></svg>
<svg class="a" style="left:915px;top:747px" width="16" height="16"><rect x="4.5" y="2.5" width="11" height="11" fill="#fff" stroke="#000"/><rect x="5" y="3" width="10" height="2" fill="#2050c0"/><rect x="0.5" y="9.5" width="6" height="6" fill="#404040" stroke="#000"/><path d="M2,9 v-2 q1.5,-2 3,0 v2" fill="none" stroke="#000"/></svg>
<svg class="a" style="left:933px;top:747px" width="16" height="16"><rect width="16" height="16" fill="#808020"/><path d="M4,3h8l-6,6 l6,1 M3,13h10" stroke="#f0f080" stroke-width="1.5" fill="none"/></svg>
<div class="t" style="left:966px;top:751px;font-size:11px;letter-spacing:0.1px">5:30 PM</div>
</body></html>
